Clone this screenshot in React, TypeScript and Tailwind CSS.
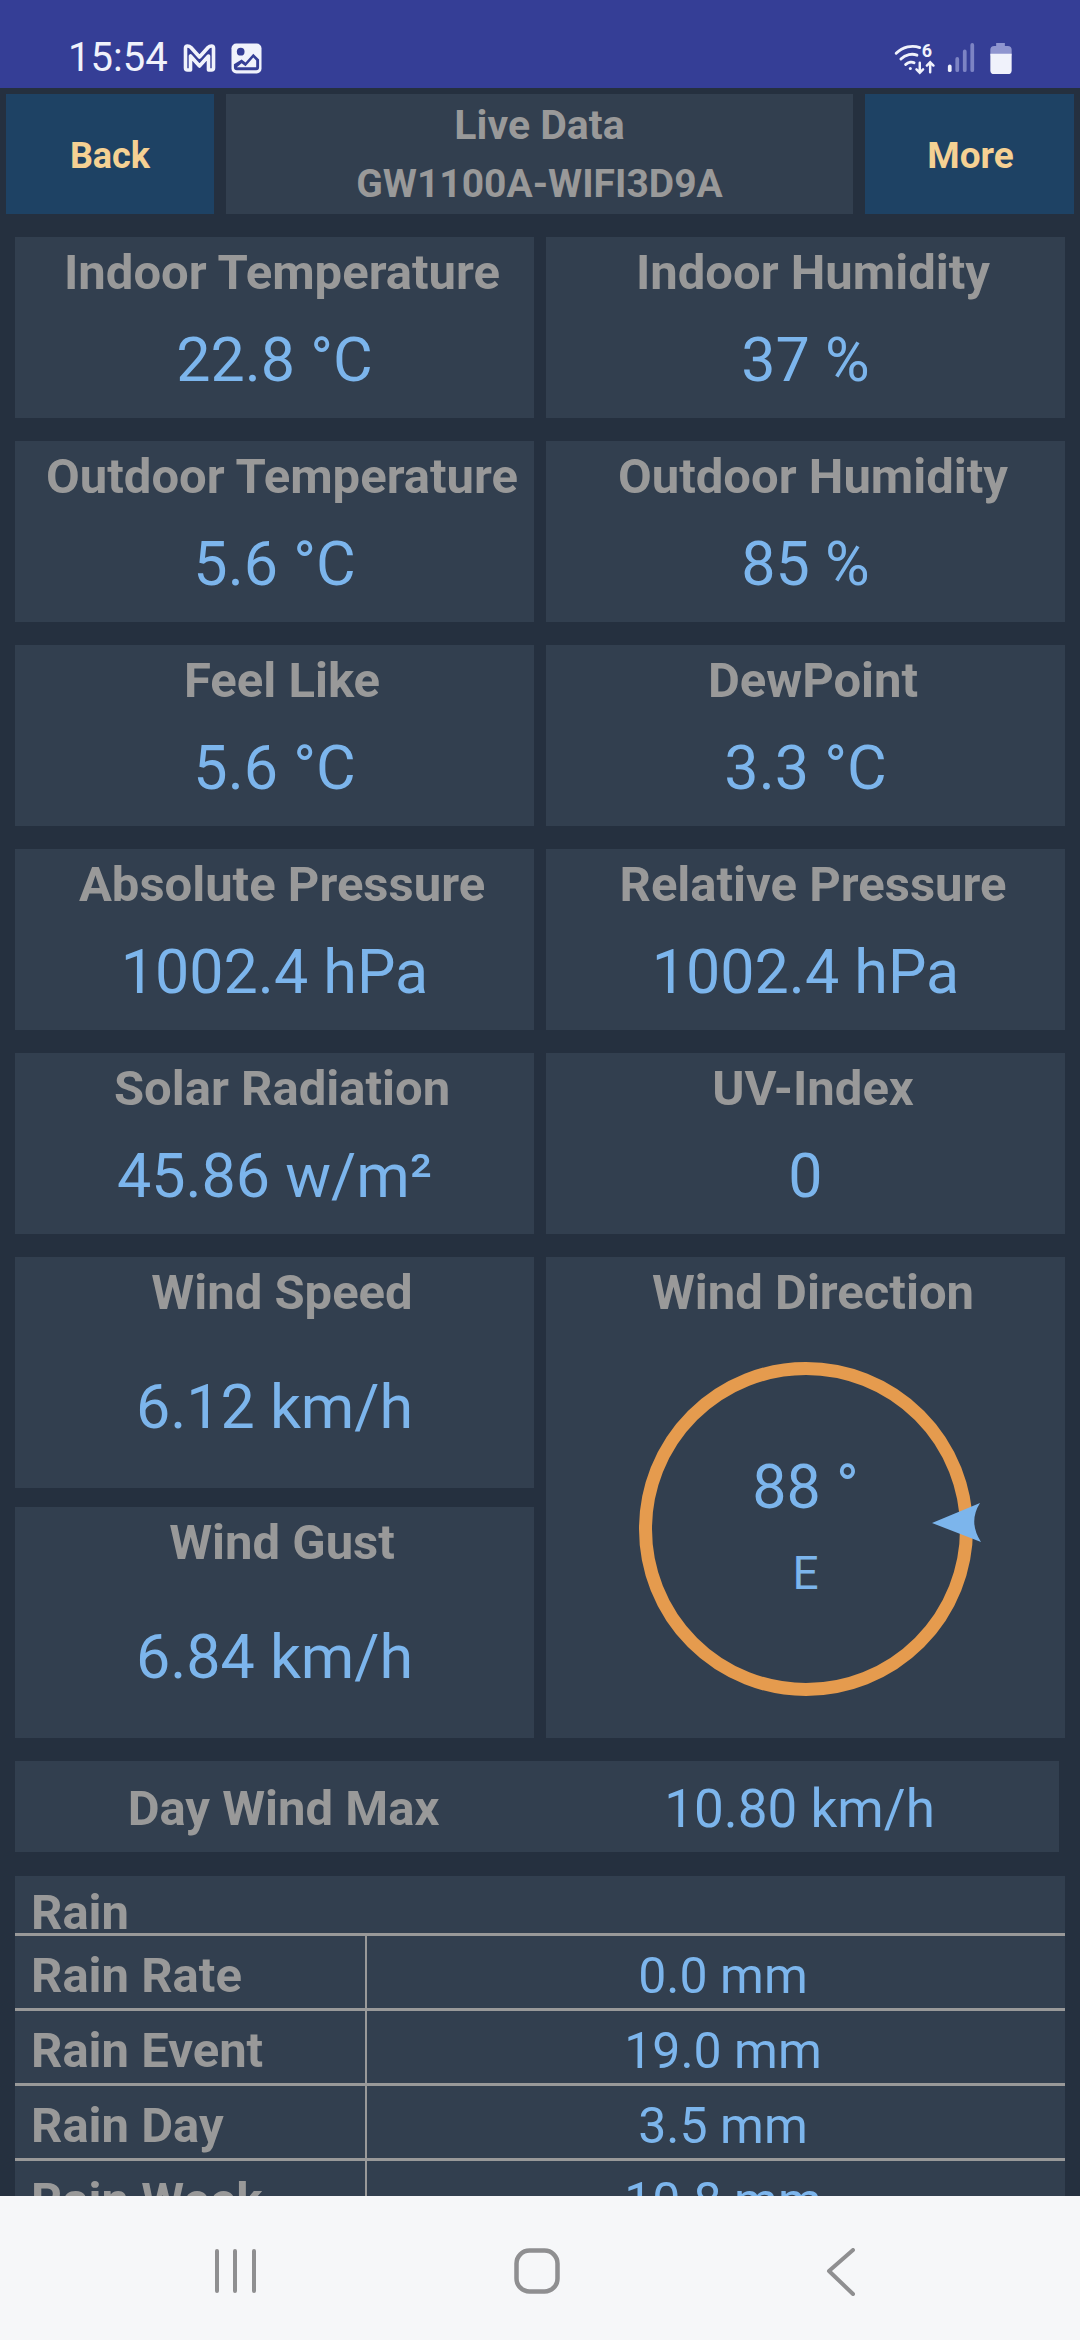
const font = { fontFamily: 'Roboto, sans-serif' };

function Card({ label, value, tall }: { label: string; value: string; tall?: boolean }) {
  return (
    <div className={`bg-[#323f4f] flex flex-col items-center ${tall ? 'h-[231px]' : 'h-[181px]'}`}>
      <div className="h-[72px] pl-[15px] leading-[72px] text-[49px] font-bold text-[#999999] whitespace-nowrap">{label}</div>
      <div className={`${tall ? 'mt-[35px]' : 'mt-[8px]'} h-[86px] leading-[86px] text-[61px] text-[#7cb5ec] whitespace-nowrap`}>{value}</div>
    </div>
  );
}

const cards = [
  ['Indoor Temperature', '22.8 °C', 'Indoor Humidity', '37 %'],
  ['Outdoor Temperature', '5.6 °C', 'Outdoor Humidity', '85 %'],
  ['Feel Like', '5.6 °C', 'DewPoint', '3.3 °C'],
  ['Absolute Pressure', '1002.4 hPa', 'Relative Pressure', '1002.4 hPa'],
  ['Solar Radiation', '45.86 w/m²', 'UV-Index', '0'],
];

const rain = [
  ['Rain Rate', '0.0 mm'],
  ['Rain Event', '19.0 mm'],
  ['Rain Day', '3.5 mm'],
  ['Rain Week', '10.8 mm'],
];

function StatusIcons() {
  return (
    <div className="flex items-center">
      <svg width="46" height="34" viewBox="0 0 46 36" fill="none" stroke="#f0f2fb" strokeLinecap="round">
        <path d="M2 13C9 6 19 4 27 7" strokeWidth="3" />
        <path d="M7 19C12 14 19 13 24 15" strokeWidth="3" />
        <path d="M12 25C15 22 19 22 21 23" strokeWidth="3" />
        <circle cx="17" cy="29" r="1.6" fill="#f0f2fb" stroke="none" />
        <path d="M27 23V33M23.5 30L27 33.5L30.5 30" strokeWidth="2.6" />
        <path d="M38 33V23M34.5 26L38 22.5L41.500 26" strokeWidth="2.6" />
        <text x="29" y="17" fontSize="19" fontWeight="700" fill="#f0f2fb" stroke="none" fontFamily="Roboto, sans-serif">6</text>
      </svg>
      <svg width="30" height="30" viewBox="0 0 30 32" className="ml-[7px]" strokeLinecap="round" strokeWidth="4">
        <path d="M3 25V29" stroke="#f0f2fb" />
        <path d="M11 17V29M19 9V29M27 2V29" stroke="#7d84c4" />
      </svg>
      <svg width="22" height="31" viewBox="0 0 22 32" className="ml-[14px]">
        <path d="M6 0H15V3H18Q22 3 22 7V13H0V7Q0 3 4 3H6Z" fill="#8f95cf" />
        <path d="M0 11H22V28Q22 32 18 32H4Q0 32 0 28Z" fill="#f0f2fb" />
      </svg>
    </div>
  );
}

function LeftStatusIcons() {
  return (
    <div className="flex items-center ml-[14px] gap-[14px]">
      <svg width="35" height="28" viewBox="0 0 32 28" fill="none" stroke="#f0f2fb" strokeWidth="3.6" strokeLinejoin="round">
        <path d="M2 4Q2 2 4 2Q6 2 7.500 3.500L16 13L24.500 3.500Q26 2 28 2Q30 2 30 4V24Q30 26 28 26H25V12L16 22L7 12V26H4Q2 26 2 24Z" />
      </svg>
      <svg width="31" height="31" viewBox="0 0 32 32">
        <rect width="31" height="31" x="0.500" y="0.500" rx="5" fill="#f0f2fb" />
        <circle cx="10" cy="9" r="4" fill="#353e96" />
        <path d="M3 22L11 17L15 20L23 11L29 17V25Q29 28 26 28H6Q3 28 3 25Z" fill="#353e96" />
        <path d="M6 25L11 21L15 24L23 15L26 18V25Z" fill="#f0f2fb" />
      </svg>
    </div>
  );
}

export default function App() {
  return (
    <div style={font} className="w-[1080px] h-[2340px] flex flex-col overflow-hidden bg-[#25303f]">
      <div className="h-[88px] shrink-0 bg-[#353e96] flex items-center justify-between pl-[68px] pr-[68px] pt-[28px]">
        <div className="flex items-center">
          <span className="text-[40px] leading-[40px] text-[#f0f2fb]">15:54</span>
          <LeftStatusIcons />
        </div>
        <StatusIcons />
      </div>

      <div className="flex-1 min-h-0 overflow-hidden">
        <div className="flex gap-[12px] px-[6px] pt-[6px] h-[126px]">
          <div className="w-[208px] pt-[3px] flex items-center justify-center bg-[#1e4264] text-[#f5d193] text-[36px] font-bold">Back</div>
          <div className="flex-1 pt-[2px] bg-[#323f4f] text-[#999999] font-bold text-center">
            <div className="h-[58px] leading-[58px] text-[41px]">Live Data</div>
            <div className="h-[60px] leading-[60px] text-[39px]">GW1100A-WIFI3D9A</div>
          </div>
          <div className="w-[209px] pt-[3px] pl-[2px] flex items-center justify-center bg-[#1e4264] text-[#f5d193] text-[37px] font-bold">More</div>
        </div>

        <div className="px-[15px] pt-[23px]">
          <div className="grid grid-cols-2 gap-x-[12px] gap-y-[23px]">
            {cards.map((c) => (
              <div key={c[0]} className="contents">
                <Card label={c[0]} value={c[1]} />
                <Card label={c[2]} value={c[3]} />
              </div>
            ))}
          </div>

          <div className="grid grid-cols-2 gap-x-[12px] mt-[23px]">
            <div className="flex flex-col gap-[19px]">
              <Card label="Wind Speed" value="6.12 km/h" tall />
              <Card label="Wind Gust" value="6.84 km/h" tall />
            </div>
            <div className="bg-[#323f4f] flex flex-col items-center">
              <div className="h-[72px] pl-[15px] leading-[72px] text-[49px] font-bold text-[#999999]">Wind Direction</div>
              <div className="relative mt-[33px] w-[334px] h-[334px] rounded-full border-[13px] border-[#e59b4e] flex flex-col items-center text-[#7cb5ec]">
                <div className="mt-[77px] h-[70px] leading-[70px] text-[61px]">88 °</div>
                <div className="mt-[23px] h-[56px] leading-[56px] text-[46px]">E</div>
                <svg width="50" height="40" viewBox="0 0 50 40" className="absolute left-[280px] top-[128px]">
                  <path d="M0 20L48 0Q36 19 49 39Z" fill="#7cb5ec" />
                </svg>
              </div>
            </div>
          </div>

          <div className="mt-[23px] h-[91px] w-[1044px] bg-[#323f4f] flex items-center">
            <div className="w-[525px] pt-[4px] pl-[12px] text-center text-[#999999] font-bold text-[49px]">Day Wind Max</div>
            <div className="flex-1 pt-[6px] text-center text-[#7cb5ec] text-[53px]">10.80 km/h</div>
          </div>

          <div className="mt-[24px] bg-[#323f4f]">
            <div className="h-[57px] pl-[16px] pt-[8px] leading-[57px] text-[49px] font-bold text-[#999999]">Rain</div>
            {rain.map((r) => (
              <div key={r[0]} className="flex h-[75px] border-t-[3px] border-[#999999]">
                <div className="w-[352px] pl-[16px] pt-[4px] leading-[72px] text-[49px] font-bold text-[#999999] border-r-[2px] border-[#999999]">{r[0]}</div>
                <div className="flex-1 pt-[4px] pl-[14px] text-center leading-[72px] text-[50px] text-[#7cb5ec]">{r[1]}</div>
              </div>
            ))}
          </div>
        </div>
      </div>

      <div className="h-[144px] shrink-0 bg-[#f6f7f9] flex items-start pt-[53px] pl-[213px]">
        <svg width="44" height="44" viewBox="0 0 44 44" stroke="#8f8f91" strokeWidth="4" strokeLinecap="round">
          <path d="M4 2V42M22 2V42M41 2V42" />
        </svg>
        <svg width="46" height="46" viewBox="0 0 46 46" fill="none" stroke="#8f8f91" strokeWidth="4.500" className="ml-[257px] -mt-[1px]">
          <rect x="2.500" y="2.500" width="41" height="41" rx="13" />
        </svg>
        <svg width="30" height="48" viewBox="0 0 30 48" fill="none" stroke="#8f8f91" strokeWidth="4" strokeLinecap="round" strokeLinejoin="round" className="ml-[266px] -mt-[1px]">
          <path d="M27 2L3 23L27 46" />
        </svg>
      </div>
    </div>
  );
}
